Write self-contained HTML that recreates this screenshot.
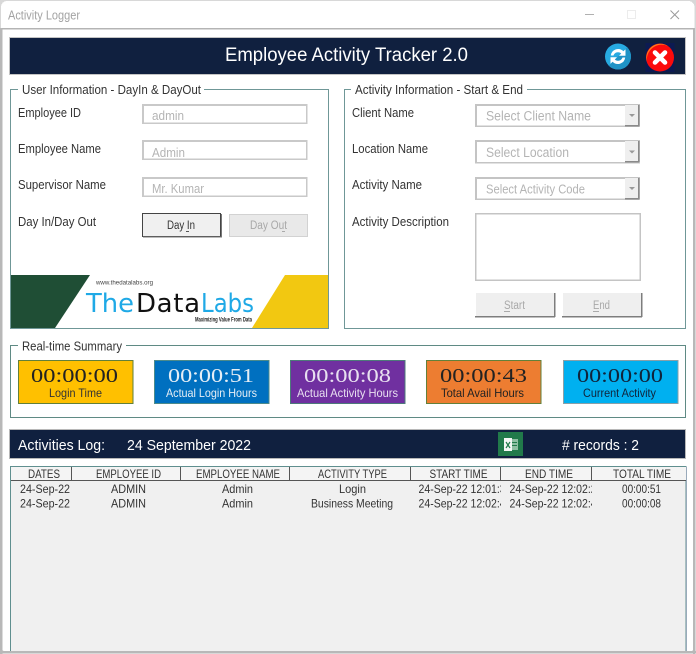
<!DOCTYPE html>
<html><head><meta charset="utf-8"><title>Activity Logger</title>
<style>
html,body{margin:0;padding:0;background:#fff;width:696px;height:654px;overflow:hidden}
svg{display:block}
text{font-family:"Liberation Sans",sans-serif;white-space:pre}
.lb{font-size:12.5px;fill:#333}
.in{font-size:12.5px;fill:#b4b4b4}
.cb{font-size:13.5px;fill:#b4b4b4}
.dis{font-size:11.5px;fill:#a8a8a8}
.tm{font-family:"Liberation Serif",serif;font-size:20px}
.cap{font-size:12px}
.th{font-size:12px;fill:#333}
.td{font-size:12px;fill:#333}
.w{fill:#fff}
.logo{font-family:"DejaVu Sans",sans-serif;font-size:26px}
</style></head><body>
<svg width="696" height="654" viewBox="0 0 696 654" xmlns="http://www.w3.org/2000/svg" shape-rendering="crispEdges">
<defs>
<clipPath id="c1"><rect x="412" y="482" width="89" height="30"/></clipPath>
<clipPath id="c2"><rect x="502" y="482" width="90" height="30"/></clipPath>
</defs>
<!-- window -->
<rect width="696" height="654" fill="#d8d8d8"/>
<rect x="1" y="1" width="693.5" height="651" rx="6" fill="#fff"/>
<rect x="0" y="28" width="2.5" height="626" fill="#b8b8b8"/>
<rect x="693" y="28" width="2" height="626" fill="#b8b8b8"/>
<rect x="2" y="28" width="692" height="1.5" fill="#b4b4b4"/>
<text x="8" y="19.5" fill="#a3a3a3" textLength="72" lengthAdjust="spacingAndGlyphs" style="font-size:12.5px">Activity Logger</text>
<rect x="585" y="14" width="9" height="1" fill="#b0b0b0"/>
<rect x="627.5" y="10.5" width="8" height="8" fill="none" stroke="#ececec"/>
<path d="M670.5 10.5 679 19M679 10.5 670.5 19" stroke="#9a9a9a" stroke-width="1" fill="none" shape-rendering="auto"/>

<!-- header -->
<rect x="9.5" y="37.5" width="676" height="37" fill="#10203f" stroke="#c4c4c4"/>
<text x="225" y="61" class="w" style="font-size:19px" textLength="243" lengthAdjust="spacingAndGlyphs">Employee Activity Tracker 2.0</text>
<g shape-rendering="auto">
<circle cx="618" cy="56.5" r="13" fill="#27aae1"/>
<path d="M627.2 47.3A13 13 0 0 1 608.8 65.7Z" fill="#1f93c6"/>
<path d="M610.8 55.5a7.4 7.4 0 0 1 12.6-4.3l2.1-2v6.5h-6.5l2.2-2.2a4.7 4.7 0 0 0-7.7 2z" fill="#fff"/>
<path d="M625.2 57.5a7.4 7.4 0 0 1-12.6 4.3l-2.1 2v-6.5h6.5l-2.2 2.2a4.7 4.7 0 0 0 7.7-2z" fill="#fff"/>
<rect x="645.5" y="43" width="29" height="29" fill="#0c1a52"/>
<circle cx="660" cy="57.5" r="14" fill="#fb0b0b"/>
<path d="M647 62A14 14 0 0 1 668 46 A15 15 0 0 0 647 62Z" fill="#ff7a1a"/>
<path d="M655 52.5 665 62.5M665 52.5 655 62.5" stroke="#fff" stroke-width="4.6" stroke-linecap="round" fill="none"/>
</g>

<!-- group 1 -->
<path d="M18 89.5H10.5V328.5H328.5V89.5H204" fill="none" stroke="#6f9797"/>
<text x="22" y="94" class="lb" textLength="179" lengthAdjust="spacingAndGlyphs">User Information - DayIn &amp; DayOut</text>
<text x="18" y="117" class="lb" textLength="63" lengthAdjust="spacingAndGlyphs">Employee ID</text>
<text x="18" y="153" class="lb" textLength="83" lengthAdjust="spacingAndGlyphs">Employee Name</text>
<text x="18" y="189" class="lb" textLength="88" lengthAdjust="spacingAndGlyphs">Supervisor Name</text>
<text x="18" y="226" class="lb" textLength="78" lengthAdjust="spacingAndGlyphs">Day In/Day Out</text>

<g>
<rect x="142" y="104" width="165.5" height="20" fill="#c9c9c9"/><rect x="144" y="106" width="162" height="16.5" fill="#fff"/>
<rect x="142" y="140" width="165.5" height="20" fill="#c9c9c9"/><rect x="144" y="142" width="162" height="16.5" fill="#fff"/>
<rect x="142" y="177" width="165.5" height="20" fill="#c9c9c9"/><rect x="144" y="179" width="162" height="16.5" fill="#fff"/>
</g>
<text x="152" y="120" class="in" textLength="32" lengthAdjust="spacingAndGlyphs">admin</text>
<text x="152" y="157" class="in" textLength="33" lengthAdjust="spacingAndGlyphs">Admin</text>
<text x="152" y="193" class="in" textLength="52" lengthAdjust="spacingAndGlyphs">Mr. Kumar</text>

<rect x="142.5" y="213.5" width="78" height="23" fill="#f0f0f0" stroke="#444"/>
<rect x="221" y="214" width="1" height="23" fill="#777"/><rect x="143" y="236.5" width="79" height="1" fill="#777"/>
<text x="167" y="229" style="font-size:11.5px" fill="#333" textLength="28" lengthAdjust="spacingAndGlyphs">Day In</text>
<rect x="186" y="231" width="3" height="1" fill="#555"/>
<rect x="229.5" y="214.5" width="78" height="22" fill="#e9e9e9" stroke="#d2d2d2"/>
<text x="250" y="229" class="dis" textLength="37" lengthAdjust="spacingAndGlyphs">Day Out</text>
<rect x="282" y="231" width="3" height="1" fill="#aaa"/>

<!-- logo -->
<polygon points="11,275 90,275 55,328 11,328" fill="#1f4e35" shape-rendering="auto"/>
<polygon points="285,275 328,275 328,328 252,328" fill="#f2c811" shape-rendering="auto"/>
<text x="96" y="284.5" style="font-size:6.5px" fill="#444" textLength="57" lengthAdjust="spacingAndGlyphs">www.thedatalabs.org</text>
<g shape-rendering="auto">
<text x="86" y="312" class="logo" fill="#1fa9e6" textLength="48" lengthAdjust="spacingAndGlyphs">The</text>
<text x="136" y="312" class="logo" fill="#111" textLength="64" lengthAdjust="spacing">Data</text>
<text x="201" y="312" class="logo" fill="#1fa9e6" textLength="53" lengthAdjust="spacingAndGlyphs">Labs</text>
</g>
<text x="195" y="321.5" style="font-size:6px;font-weight:bold" fill="#222" textLength="57" lengthAdjust="spacingAndGlyphs">Maximizing Value From Data</text>

<!-- group 2 -->
<path d="M351 89.5H344.5V328.5H685.5V89.5H527" fill="none" stroke="#6f9797"/>
<text x="355" y="94" class="lb" textLength="168" lengthAdjust="spacingAndGlyphs">Activity Information - Start &amp; End</text>
<text x="352" y="117" class="lb" textLength="62" lengthAdjust="spacingAndGlyphs">Client Name</text>
<text x="352" y="153" class="lb" textLength="76" lengthAdjust="spacingAndGlyphs">Location Name</text>
<text x="352" y="189" class="lb" textLength="70" lengthAdjust="spacingAndGlyphs">Activity Name</text>
<text x="352" y="226" class="lb" textLength="97" lengthAdjust="spacingAndGlyphs">Activity Description</text>

<g>
<rect x="475" y="104" width="165" height="23" fill="#c4c4c4"/><rect x="477" y="106" width="161" height="19.5" fill="#fff"/>
<rect x="475" y="140" width="165" height="23.5" fill="#c4c4c4"/><rect x="477" y="142" width="161" height="20" fill="#fff"/>
<rect x="475" y="177" width="165" height="23" fill="#c4c4c4"/><rect x="477" y="179" width="161" height="19.5" fill="#fff"/>
<rect x="625" y="105" width="14" height="21" fill="#efefef"/><rect x="625" y="125" width="14" height="1.5" fill="#8a8a8a"/><rect x="638" y="105" width="1.5" height="21" fill="#8a8a8a"/>
<rect x="625" y="141" width="14" height="21" fill="#efefef"/><rect x="625" y="161" width="14" height="1.5" fill="#8a8a8a"/><rect x="638" y="141" width="1.5" height="21" fill="#8a8a8a"/>
<rect x="625" y="178" width="14" height="21" fill="#efefef"/><rect x="625" y="198" width="14" height="1.5" fill="#8a8a8a"/><rect x="638" y="178" width="1.5" height="21" fill="#8a8a8a"/>
<g fill="#999" shape-rendering="auto">
<polygon points="629,114 635,114 632,117"/><polygon points="629,150.5 635,150.5 632,153.5"/><polygon points="629,187 635,187 632,190"/>
</g>
</g>
<text x="486" y="120.5" class="cb" textLength="105" lengthAdjust="spacingAndGlyphs">Select Client Name</text>
<text x="486" y="157" class="cb" textLength="83" lengthAdjust="spacingAndGlyphs">Select Location</text>
<text x="486" y="193.5" class="cb" style="font-size:12.5px" textLength="99" lengthAdjust="spacingAndGlyphs">Select Activity Code</text>
<rect x="475" y="213" width="166" height="68" fill="#c4c4c4"/><rect x="476.5" y="214.5" width="163" height="65" fill="#fff"/>

<rect x="476" y="293" width="78" height="23" fill="#efefef"/>
<rect x="554" y="293" width="1.5" height="24" fill="#7d7d7d"/><rect x="475" y="316" width="80" height="1.5" fill="#7d7d7d"/>
<text x="504" y="309" class="dis" textLength="21" lengthAdjust="spacingAndGlyphs">Start</text>
<rect x="504" y="311" width="6" height="1" fill="#aaa"/>
<rect x="563" y="293" width="78" height="23" fill="#efefef"/>
<rect x="641" y="293" width="1.5" height="24" fill="#7d7d7d"/><rect x="562" y="316" width="80" height="1.5" fill="#7d7d7d"/>
<text x="593" y="309" class="dis" textLength="17" lengthAdjust="spacingAndGlyphs">End</text>
<rect x="593" y="311" width="6" height="1" fill="#aaa"/>

<!-- summary -->
<path d="M18 345.5H10.5V417.5H685.5V345.5H126" fill="none" stroke="#5f8a84"/>
<text x="22" y="350.5" class="lb" textLength="100" lengthAdjust="spacingAndGlyphs">Real-time Summary</text>

<rect x="18.5" y="360.5" width="114.5" height="43" fill="#ffc000" stroke="#62803a"/>
<text x="31" y="382" class="tm" fill="#222" textLength="87" lengthAdjust="spacingAndGlyphs">00:00:00</text>
<text x="49" y="397" class="cap" fill="#333" textLength="53" lengthAdjust="spacingAndGlyphs">Login Time</text>

<rect x="154.5" y="360.5" width="114.5" height="43" fill="#0070c0" stroke="#4d8a8a"/>
<text x="168" y="382" class="tm" fill="#e6eef5" textLength="86" lengthAdjust="spacingAndGlyphs">00:00:51</text>
<text x="166" y="397" class="cap" fill="#e6eef5" textLength="91" lengthAdjust="spacingAndGlyphs">Actual Login Hours</text>

<rect x="290.5" y="360.5" width="114.5" height="43" fill="#7030a0" stroke="#4d7a7a"/>
<text x="304" y="382" class="tm" fill="#e8e0f0" textLength="87" lengthAdjust="spacingAndGlyphs">00:00:08</text>
<text x="297" y="397" class="cap" fill="#e8e0f0" textLength="101" lengthAdjust="spacingAndGlyphs">Actual Activity Hours</text>

<rect x="426.5" y="360.5" width="114.5" height="43" fill="#ed7d31" stroke="#62803a"/>
<text x="440" y="382" class="tm" fill="#222" textLength="87" lengthAdjust="spacingAndGlyphs">00:00:43</text>
<text x="441" y="397" class="cap" fill="#222" textLength="83" lengthAdjust="spacingAndGlyphs">Total Avail Hours</text>

<rect x="563.5" y="360.5" width="114.5" height="43" fill="#00b0f0" stroke="#8aa0a8"/>
<text x="577" y="382" class="tm" fill="#10233a" textLength="86" lengthAdjust="spacingAndGlyphs">00:00:00</text>
<text x="583" y="397" class="cap" fill="#10233a" textLength="73" lengthAdjust="spacingAndGlyphs">Current Activity</text>

<!-- log bar -->
<rect x="9.5" y="429.5" width="676" height="29" fill="#10203f" stroke="#b8b8b8"/>
<text x="18" y="450" class="w" style="font-size:15px" textLength="87" lengthAdjust="spacingAndGlyphs">Activities Log:</text>
<text x="127" y="450" class="w" style="font-size:15px" textLength="124" lengthAdjust="spacingAndGlyphs">24 September 2022</text>
<rect x="498" y="432" width="25" height="24" fill="#217a4a"/>
<rect x="511" y="439" width="7" height="11" fill="#8fbfa3"/>
<rect x="512" y="442" width="5" height="1" fill="#217a4a"/><rect x="512" y="445" width="5" height="1" fill="#217a4a"/>
<rect x="504" y="438" width="8" height="13" fill="#f4f7f5"/>
<path d="M506 442 510 448M510 442 506 448" stroke="#217a4a" stroke-width="1.2" fill="none" shape-rendering="auto"/>
<text x="562" y="450" class="w" style="font-size:15px" textLength="77" lengthAdjust="spacingAndGlyphs"># records : 2</text>

<!-- table -->
<rect x="10.5" y="466.5" width="675.5" height="186" fill="#f0f0f0" stroke="#5f8f8f"/>
<rect x="686" y="467" width="1" height="184" fill="#9ab"/>
<rect x="11" y="467" width="675" height="13" fill="#f4f4f4"/>
<rect x="11" y="480" width="675" height="1" fill="#555"/>
<g fill="#555">
<rect x="71" y="467" width="1" height="14"/><rect x="180" y="467" width="1" height="14"/><rect x="289" y="467" width="1" height="14"/><rect x="410" y="467" width="1" height="14"/><rect x="500" y="467" width="1" height="14"/><rect x="591" y="467" width="1" height="14"/>
</g>
<text x="28" y="478" class="th" textLength="32" lengthAdjust="spacingAndGlyphs">DATES</text>
<text x="96" y="478" class="th" textLength="65" lengthAdjust="spacingAndGlyphs">EMPLOYEE ID</text>
<text x="196" y="478" class="th" textLength="84" lengthAdjust="spacingAndGlyphs">EMPLOYEE NAME</text>
<text x="318" y="478" class="th" textLength="69" lengthAdjust="spacingAndGlyphs">ACTIVITY TYPE</text>
<text x="429.5" y="478" class="th" textLength="58" lengthAdjust="spacingAndGlyphs">START TIME</text>
<text x="525" y="478" class="th" textLength="48" lengthAdjust="spacingAndGlyphs">END TIME</text>
<text x="613" y="478" class="th" textLength="58" lengthAdjust="spacingAndGlyphs">TOTAL TIME</text>

<text x="20" y="493" class="td" textLength="50" lengthAdjust="spacingAndGlyphs">24-Sep-22</text>
<text x="111" y="493" class="td" textLength="35" lengthAdjust="spacingAndGlyphs">ADMIN</text>
<text x="222" y="493" class="td" textLength="31" lengthAdjust="spacingAndGlyphs">Admin</text>
<text x="339" y="493" class="td" textLength="27" lengthAdjust="spacingAndGlyphs">Login</text>
<text x="418.5" y="493" class="td" clip-path="url(#c1)" textLength="93" lengthAdjust="spacingAndGlyphs">24-Sep-22 12:01:34</text>
<text x="509.5" y="493" class="td" clip-path="url(#c2)" textLength="93" lengthAdjust="spacingAndGlyphs">24-Sep-22 12:02:25</text>
<text x="622" y="493" class="td" textLength="39" lengthAdjust="spacingAndGlyphs">00:00:51</text>

<text x="20" y="507.5" class="td" textLength="50" lengthAdjust="spacingAndGlyphs">24-Sep-22</text>
<text x="111" y="507.5" class="td" textLength="35" lengthAdjust="spacingAndGlyphs">ADMIN</text>
<text x="222" y="507.5" class="td" textLength="31" lengthAdjust="spacingAndGlyphs">Admin</text>
<text x="311" y="507.5" class="td" textLength="82" lengthAdjust="spacingAndGlyphs">Business Meeting</text>
<text x="418.5" y="507.5" class="td" clip-path="url(#c1)" textLength="93" lengthAdjust="spacingAndGlyphs">24-Sep-22 12:02:40</text>
<text x="509.5" y="507.5" class="td" clip-path="url(#c2)" textLength="93" lengthAdjust="spacingAndGlyphs">24-Sep-22 12:02:48</text>
<text x="622" y="507.5" class="td" textLength="39" lengthAdjust="spacingAndGlyphs">00:00:08</text>
<rect x="0" y="651" width="696" height="2" fill="#b8b8b8"/>
</svg>
</body></html>
